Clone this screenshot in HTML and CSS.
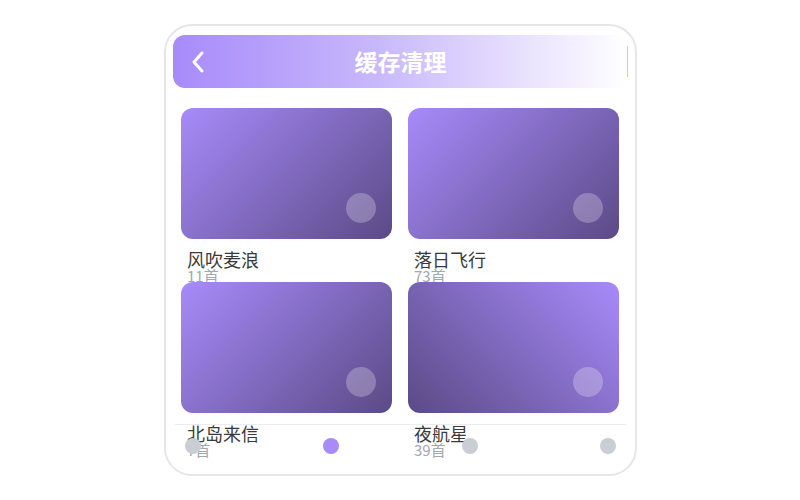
FILE: index.html
```html
<!DOCTYPE html>
<html lang="zh">
<head>
<meta charset="utf-8">
<title>缓存清理</title>
<link rel="stylesheet" href="styles.css">
</head>
<body>
<div class="phone">
  <header class="topbar">
    <span class="back">
      <svg width="14" height="22" viewBox="0 0 14 22"><path d="M11 2 L3 11 L11 20" fill="none" stroke="#fff" stroke-width="3" stroke-linecap="round" stroke-linejoin="round"/></svg>
    </span>
    <h1 class="title">缓存清理</h1>
  </header>
  <div class="grid">
    <div class="item">
      <div class="cover cover-a"><span class="play"></span></div>
      <div class="label"><div class="name">风吹麦浪</div><div class="count">11首</div></div>
    </div>
    <div class="item">
      <div class="cover cover-a"><span class="play"></span></div>
      <div class="label"><div class="name">落日飞行</div><div class="count">73首</div></div>
    </div>
    <div class="item">
      <div class="cover cover-a"><span class="play"></span></div>
      <div class="label"><div class="name">北岛来信</div><div class="count">7首</div></div>
    </div>
    <div class="item">
      <div class="cover cover-b"><span class="play"></span></div>
      <div class="label"><div class="name">夜航星</div><div class="count">39首</div></div>
    </div>
  </div>
  <nav class="tabbar">
    <span class="dot"></span>
    <span class="dot active"></span>
    <span class="dot"></span>
    <span class="dot"></span>
  </nav>
</div>
</body>
</html>
```
FILE: styles.css
```css
html, body {
  margin: 0;
  padding: 0;
  background: #ffffff;
  font-family: "Noto Sans CJK SC", "Noto Sans", sans-serif;
}

.phone {
  position: relative;
  box-sizing: border-box;
  width: 473px;
  height: 452px;
  margin: 24px 0 0 164px;
  padding: 9px 7px 0;
  border: 2px solid #e6e6ea;
  border-radius: 28px;
  overflow: hidden;
  background: #fff;
}

.topbar {
  position: relative;
  display: flex;
  align-items: center;
  justify-content: center;
  height: 53px;
  border-radius: 12px;
  background: linear-gradient(90deg, #a78bfa 0%, #c8b8fb 45%, #ffffff 100%);
}

.topbar::after {
  content: "";
  position: absolute;
  right: 0;
  top: 11px;
  width: 1px;
  height: 31px;
  background: #cfc4f5;
}

.back {
  position: absolute;
  left: 18px;
  top: 16px;
  display: flex;
}

.title {
  margin: 0;
  color: #fff;
  font-size: 23px;
  font-weight: 700;
  line-height: 1;
}

.grid {
  display: grid;
  grid-template-columns: 211px 211px;
  grid-auto-rows: 174px;
  column-gap: 16px;
  padding: 20px 8px 0 8px;
}

.item {
  height: 174px;
}

.cover {
  position: relative;
  height: 131px;
  border-radius: 12px;
}

.cover-a {
  background: linear-gradient(135deg, #a78bfa 0%, #5b4a86 100%);
}

.cover-b {
  background: linear-gradient(225deg, #a78bfa 0%, #5b4a86 100%);
}

.play {
  position: absolute;
  right: 16px;
  bottom: 16px;
  width: 30px;
  height: 30px;
  border-radius: 50%;
  background: rgba(255, 255, 255, 0.25);
}

.label {
  padding: 11px 6px 0;
}

.name {
  font-size: 18px;
  line-height: 18px;
  color: #3a3a3a;
}

.count {
  font-size: 15px;
  line-height: 15px;
  color: #a3a7ae;
}

.tabbar {
  position: absolute;
  left: 9px;
  right: 9px;
  bottom: 7px;
  height: 42px;
  border-top: 1px solid #ececef;
  display: flex;
  align-items: center;
  justify-content: space-between;
  padding: 0 10px;
}

.dot {
  width: 16px;
  height: 16px;
  border-radius: 50%;
  background: #c9cdd4;
}

.dot.active {
  background: #a78bfa;
}
```
